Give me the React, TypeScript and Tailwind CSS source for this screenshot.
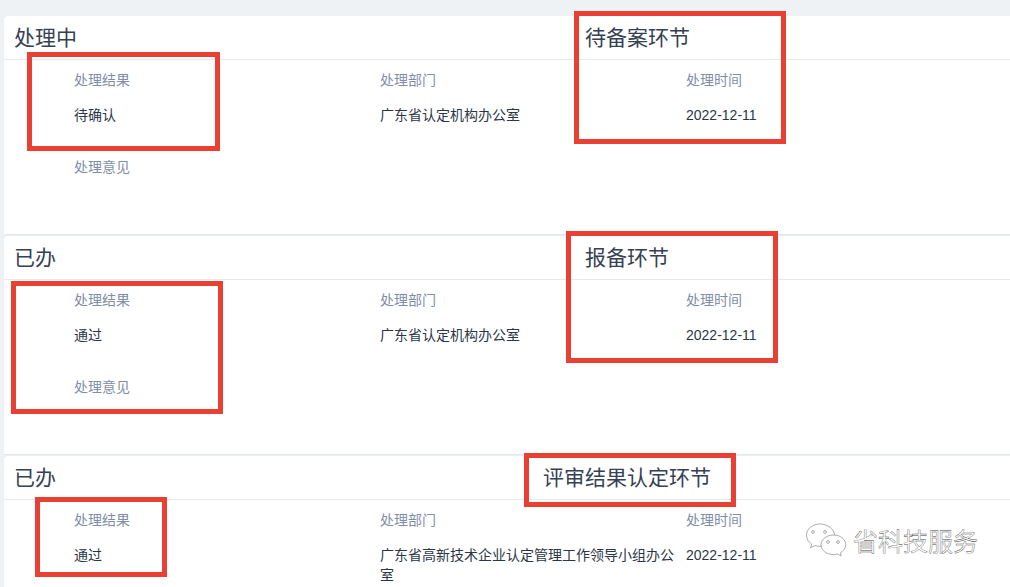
const FONT = "font-['Liberation_Sans','Noto_Sans_CJK_SC',sans-serif]";

function Cell({ label, value }: { label: string; value?: string }) {
  return (
    <div className="w-[306px] shrink-0 pr-[12px]">
      <div className="h-[20px] text-[14px] leading-[20px] text-[#7f8ea8]">{label}</div>
      {value && <div className="mt-[15px] text-[14px] leading-[20px] text-[#2c3646]">{value}</div>}
    </div>
  );
}

function Card({ status, stage, stagePad, result, dept, opinion = true }: { status: string; stage: string; stagePad: string; result: string; dept: string; opinion?: boolean }) {
  return (
    <section className="ml-[4px] h-[219px] shrink-0 rounded-tl-[4px] border-b border-b-[#e4e8ed] bg-white shadow-[0_0_1px_#dfe3e8]">
      <header className="flex h-[44px] items-center border-b border-[#e6e9ee] text-[21px] leading-[28px] text-[#364154]">
        <div className="w-[500px] shrink-0 pl-[10px]">{status}</div>
        <div className={stagePad}>{stage}</div>
      </header>
      <div className="pl-[70px] pt-[10px]">
        <div className="flex">
          <Cell label="处理结果" value={result} />
          <Cell label="处理部门" value={dept} />
          <Cell label="处理时间" value="2022-12-11" />
        </div>
        {opinion && (
          <div className="mt-[32px]">
            <Cell label="处理意见" />
          </div>
        )}
      </div>
    </section>
  );
}

function RedBox({ className }: { className: string }) {
  return <div className={`absolute border-[5px] border-[#ea3f33] ${className}`} />;
}

export default function App() {
  return (
    <div className={`relative h-[587px] w-[1010px] overflow-hidden bg-[#eff2f5] pt-[16px] ${FONT}`}>
      <div className="flex flex-col gap-[1px]">
        <Card status="处理中" stage="待备案环节" stagePad="pl-[81px]" result="待确认" dept="广东省认定机构办公室" />
        <Card status="已办" stage="报备环节" stagePad="pl-[81px]" result="通过" dept="广东省认定机构办公室" />
        <Card status="已办" stage="评审结果认定环节" stagePad="pl-[39px]" result="通过" dept="广东省高新技术企业认定管理工作领导小组办公室" opinion={false} />
      </div>

      <RedBox className="left-[27px] top-[52px] h-[99px] w-[193px]" />
      <RedBox className="left-[574px] top-[11px] h-[133px] w-[212px]" />
      <RedBox className="left-[11px] top-[281px] h-[133px] w-[212px]" />
      <RedBox className="left-[566px] top-[231px] h-[132px] w-[212px]" />
      <RedBox className="left-[35px] top-[497px] h-[80px] w-[132px]" />
      <RedBox className="left-[524px] top-[453px] h-[54px] w-[212px]" />

      <div className="absolute left-[805px] top-[523px] flex items-center gap-[6px]">
        <svg width="42" height="38" viewBox="0 0 42 38" fill="#fff" stroke="#8a8a8a" strokeWidth="0.7">
          <path d="M15 1C7.500 1 1.500 6 1.500 12.200c0 3.600 2 6.800 5.100 8.900l-1 3.700 4.400-2.300c1.600.5 3.300.8 5 .8 7.500 0 14.500-5 14.500-11.100S22.500 1 15 1z" />
          <path d="M28.500 12C21.800 12 16 16.300 16 21.800s5.800 9.800 12.500 9.800c1.400 0 2.800-.2 4.100-.6l3.600 2-.8-3.100c2.700-1.800 5.400-4.700 5.400-8.100C40.800 16.300 35.200 12 28.500 12z" />
          <circle cx="8" cy="9" r="1.400" fill="none" />
          <circle cx="20" cy="9" r="1.400" fill="none" />
          <circle cx="23" cy="19" r="1.400" fill="none" />
          <circle cx="33" cy="19" r="1.400" fill="none" />
        </svg>
        <span className="text-[25px] leading-[36px] text-white [-webkit-text-stroke:0.35px_#444]">省科技服务</span>
      </div>
    </div>
  );
}
